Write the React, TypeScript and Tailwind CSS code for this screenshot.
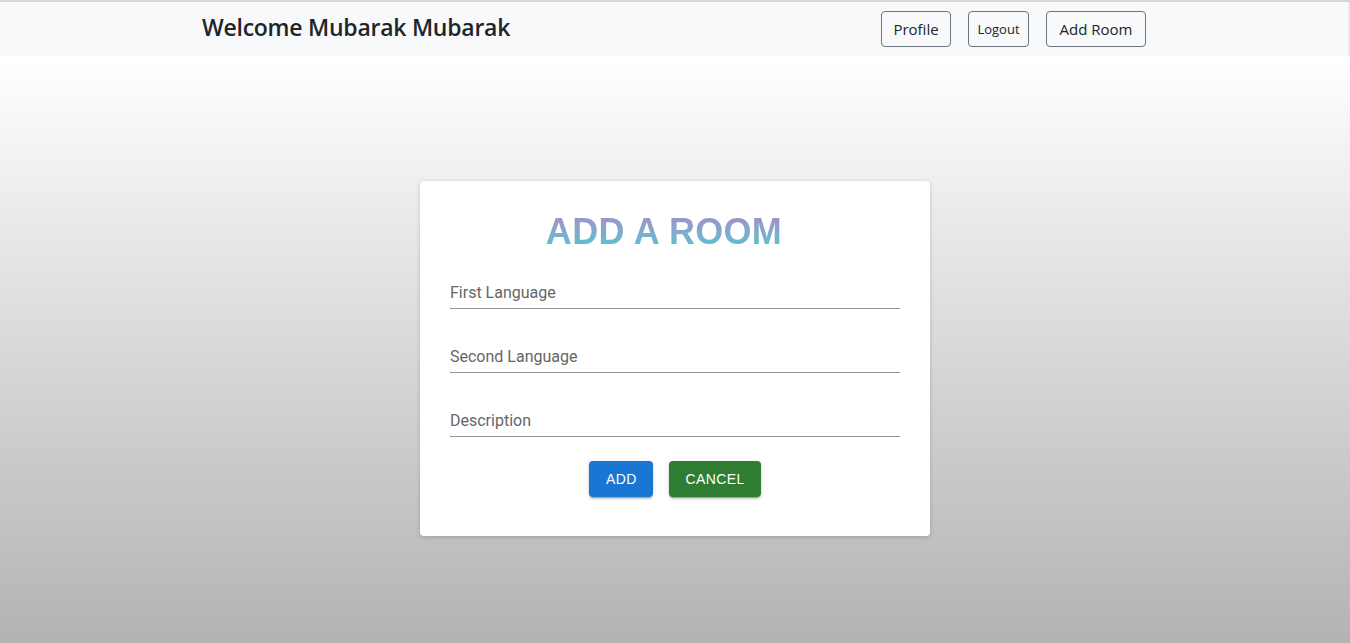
export default function App() {
  const fields = ["First Language", "Second Language", "Description"];

  return (
    <div className="min-h-screen flex flex-col border-t-2 border-[#d6d6d6] font-['Roboto',sans-serif]">
      <nav className="h-[54px] bg-[#f8f9fa] shrink-0 border-r-2 border-[#ececec]">
        <div className="w-[944px] mx-auto h-full flex items-center justify-between">
          <h4 className="font-['Open_Sans',sans-serif] text-[23px] font-semibold text-[#212529] tracking-[-0.25px] -mt-[4px]">
            Welcome Mubarak Mubarak
          </h4>
          <div className="flex items-center gap-[17px] font-['Open_Sans',sans-serif] text-[#212529]">
            <button className="h-[36px] w-[70px] border border-[#6c757d] rounded-[4px] text-[15px]">
              Profile
            </button>
            <button className="h-[36px] w-[61px] border border-[#6c757d] rounded-[4px] text-[13px] pt-[2px]">
              Logout
            </button>
            <button className="h-[36px] w-[100px] border border-[#6c757d] rounded-[4px] text-[15px]">
              Add Room
            </button>
          </div>
        </div>
      </nav>

      <main className="flex-1 bg-gradient-to-b from-white to-[#b3b3b3] pt-[125px]">
        <div className="w-[510px] h-[355px] mx-auto bg-white rounded-[4px] shadow-[0_1px_4px_rgba(0,0,0,0.18)] px-[30px] pt-[30px]">
          <h1 className="text-center pr-[22px] font-['Liberation_Sans',Arial,sans-serif] font-bold text-[36px] leading-[41px] tracking-[0.3px] bg-gradient-to-b from-[#a488c9] to-[#38c9cf] bg-clip-text text-transparent">
            ADD A ROOM
          </h1>
          <div className="flex flex-col gap-[16px] mt-[9px]">
            {fields.map((label) => (
              <div
                key={label}
                className="h-[48px] border-b border-[#949494] flex items-end pb-[4px]"
              >
                <span className="text-[16px] leading-[23px] text-[#666666]">{label}</span>
              </div>
            ))}
          </div>
          <div className="flex justify-center gap-[16px] mt-[24px]">
            <button className="h-[36px] min-w-[64px] px-[16px] rounded-[4px] bg-[#1976d2] text-white font-['Liberation_Sans',Arial,sans-serif] text-[14px] tracking-[0.4px] uppercase shadow-[0_3px_1px_-2px_rgba(0,0,0,0.2),0_2px_2px_0_rgba(0,0,0,0.14),0_1px_5px_0_rgba(0,0,0,0.12)]">
              Add
            </button>
            <button className="h-[36px] min-w-[64px] px-[16px] rounded-[4px] bg-[#2e7d32] text-white font-['Liberation_Sans',Arial,sans-serif] text-[14px] tracking-[0.4px] uppercase shadow-[0_3px_1px_-2px_rgba(0,0,0,0.2),0_2px_2px_0_rgba(0,0,0,0.14),0_1px_5px_0_rgba(0,0,0,0.12)]">
              Cancel
            </button>
          </div>
        </div>
      </main>
    </div>
  );
}
